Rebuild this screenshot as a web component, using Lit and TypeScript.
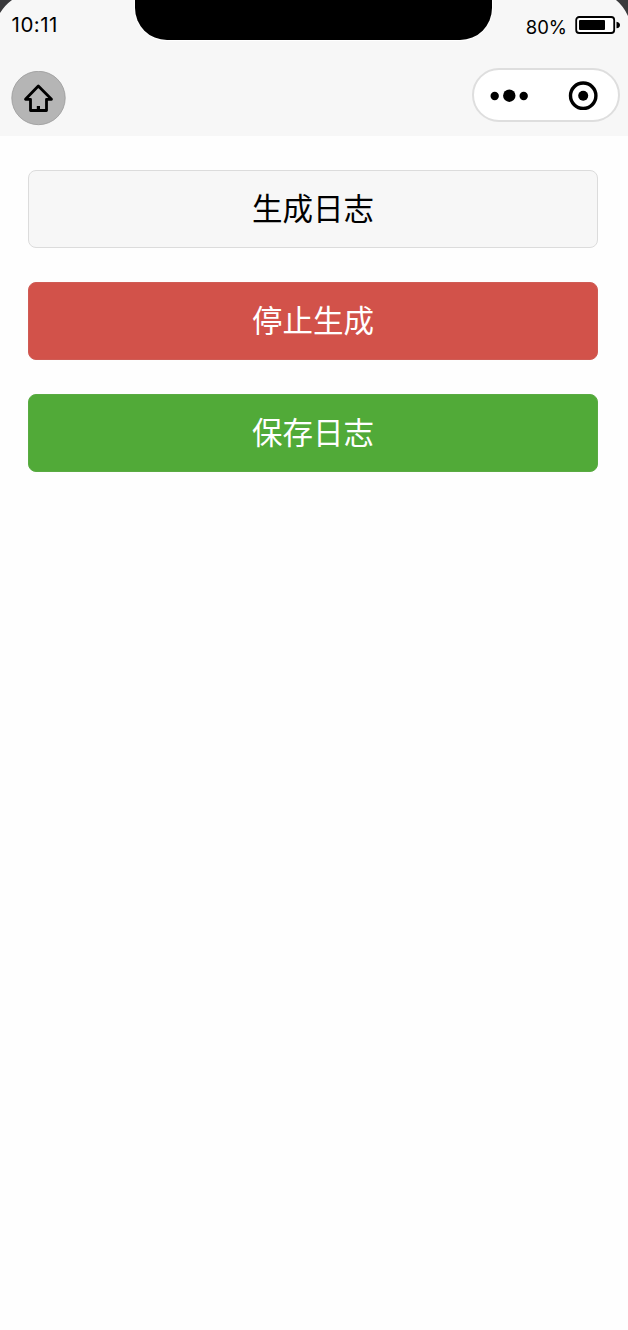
import { LitElement, html, css } from "lit";
import { customElement } from "lit/decorators.js";

@customElement("app-root")
export class AppRoot extends LitElement {
  static styles = css`
    :host {
      display: block;
      position: relative;
      height: 1330px;
      overflow: hidden;
      background: #fefefe;
      font-family: Inter, "Noto Sans CJK SC", sans-serif;
      color: #000;
    }
    * { box-sizing: border-box; }
    svg { display: block; }
    header { height: 136px; background: #f7f7f7; }
    .corner { position: absolute; top: 0; }
    .corner.left { left: 0; }
    .corner.right { right: 0; }
    .status {
      display: grid;
      grid-template-columns: 135px 357px 136px;
      height: 68px;
    }
    .time {
      padding: 13px 0 0 11.6px;
      font-size: 20.5px;
      line-height: 24px;
      letter-spacing: 0.5px;
    }
    .notch {
      height: 40px;
      background: #000;
      border-radius: 0 0 32px 32px;
      box-shadow: 0 0 0 1px #fff;
    }
    .power {
      display: flex;
      justify-content: flex-end;
      gap: 8px;
      padding: 15px 7px 0 0;
      font-size: 18.5px;
      line-height: 24px;
    }
    .nav {
      display: flex;
      justify-content: space-between;
      padding: 0 8px 0 11px;
    }
    .home { margin-top: 3px; }
    .capsule {
      width: 148px;
      height: 54px;
      border: 2px solid #dedede;
      border-radius: 27px;
      background: #fff;
    }
    main {
      display: flex;
      flex-direction: column;
      gap: 34px;
      padding: 33.5px 30px 0 28px;
    }
    button {
      display: block;
      width: 100%;
      height: 78.2px;
      margin: 0;
      padding: 0 0 4px;
      border: 1px solid #dcdcdc;
      border-radius: 8px;
      background: #f7f7f7;
      font: 400 30.5px/72px "Noto Sans CJK SC", sans-serif;
      color: #000;
      text-align: center;
    }
    .stop { background: #d2524a; border-color: #cf5c55; color: #fff; }
    .save { background: #51aa38; border-color: #5aab43; color: #fff; }
  `;

  render() {
    return html`
      <header>
        <div class="status">
          <div class="time">10:11</div>
          <div class="notch"></div>
          <div class="power">
            <span>80%</span>
            <svg width="46" height="20" viewBox="0 0 46 20">
              <rect x="1.2" y="2" width="38" height="16" rx="3" fill="#fff" stroke="#000" stroke-width="1.8" />
              <rect x="4" y="5" width="26" height="10" rx="1" />
              <path d="M41.500 6.700c2.400 .3 3.500 1.700 3.500 3.300s-1.100 3-3.500 3.300z" />
            </svg>
          </div>
        </div>
        <div class="nav">
          <svg class="home" width="55" height="55" viewBox="0 0 55 55">
            <circle cx="27.500" cy="27" r="26.700" fill="#b5b5b5" stroke="#999" stroke-width=".8" />
            <path d="M27.300 15 14.500 28.300h5v11.200h16V28.300h5z" fill="none" stroke="#000" stroke-width="2.800" stroke-linejoin="round" />
            <path d="M25.800 35h3.200v4.500h-3.200z" />
          </svg>
          <div class="capsule">
            <svg width="144" height="50" viewBox="0 0 144 50">
              <circle cx="20.700" cy="26" r="4.200" />
              <circle cx="35.300" cy="25.700" r="6.200" />
              <circle cx="49.700" cy="26" r="4.200" />
              <circle cx="109.200" cy="25.700" r="12.700" fill="none" stroke="#000" stroke-width="3.400" />
              <circle cx="109.200" cy="25.700" r="5" />
            </svg>
          </div>
        </div>
      </header>
      <svg class="corner left" width="13" height="14" viewBox="0 0 13 14">
        <path d="M0 0h12Q5 5 0 13z" fill="#3a3a3c" />
      </svg>
      <svg class="corner right" width="13" height="17" viewBox="0 0 13 17">
        <path d="M13 0H1q7.500 6 12 16z" fill="#3a3a3c" />
      </svg>
      <main>
        <button>生成日志</button>
        <button class="stop">停止生成</button>
        <button class="save">保存日志</button>
      </main>
    `;
  }
}
